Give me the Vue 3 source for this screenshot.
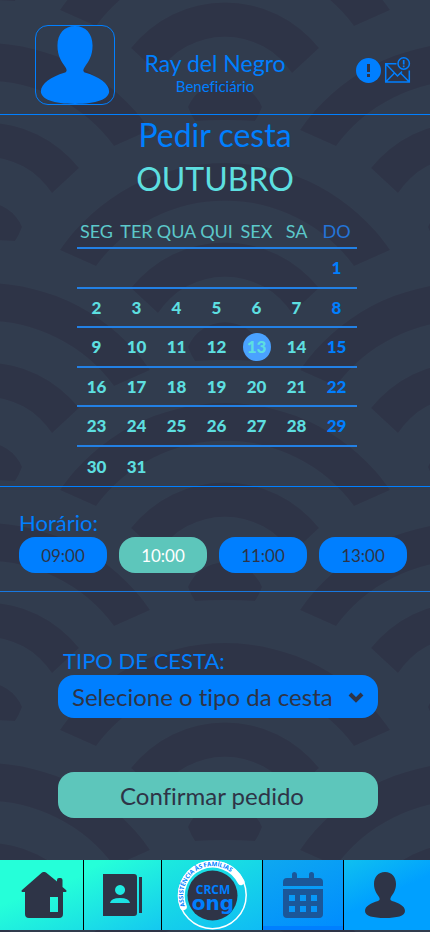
<script setup>
import { ref } from 'vue'

const weekdays = ['SEG', 'TER', 'QUA', 'QUI', 'SEX', 'SA', 'DO']
const weeks = [
  ['', '', '', '', '', '', 1],
  [2, 3, 4, 5, 6, 7, 8],
  [9, 10, 11, 12, 13, 14, 15],
  [16, 17, 18, 19, 20, 21, 22],
  [23, 24, 25, 26, 27, 28, 29],
  [30, 31, '', '', '', '', '']
]
const times = ['09:00', '10:00', '11:00', '13:00']
const day = ref(13)
const time = ref('10:00')
const basket = ref('')
</script>

<template>
  <div class="page">
    <svg class="waves" aria-hidden="true">
      <defs>
        <g id="fan">
          <path d="M-165-111A200 200 0 0 1 165-111L129-95A160 160 0 0 0-129-95Z" />
          <path d="M-94-73A120 120 0 0 1 94-73L67-48A80 80 0 0 0-67-48Z" />
          <path d="M-37-14A40 40 0 0 1 37-14Q34-6 30 0Q0-2-30 0Q-34-6-37-14Z" />
        </g>
        <pattern id="scales" width="480" height="240" patternUnits="userSpaceOnUse" patternTransform="translate(-15 1)">
          <use href="#fan" x="240" y="120" />
          <use href="#fan" x="240" y="360" />
          <use href="#fan" x="0" y="240" />
          <use href="#fan" x="480" y="240" />
        </pattern>
      </defs>
      <rect width="100%" height="100%" fill="url(#scales)" />
    </svg>

    <header class="top">
      <div class="avatar">
        <svg viewBox="0 0 80 80" aria-hidden="true">
          <path d="M40 0C51 0 58 8 58 20C58 31 54 36 50 42C48 45 48 47 51 48C64 52 75 59 75 67C75 75 62 80 40 80C18 80 5 75 5 67C5 59 16 52 29 48C32 47 32 45 30 42C26 36 22 31 22 20C22 8 29 0 40 0Z" />
        </svg>
      </div>
      <div class="who">
        <h1>Ray del Negro</h1>
        <p>Beneficiário</p>
      </div>
      <div class="alerts">
        <button type="button" aria-label="Avisos">
          <svg viewBox="0 0 25 25"><circle cx="12.500" cy="12.500" r="12.500" fill="#007fff" /><path d="M11 6h3v8h-3zM11 16h3v3h-3z" fill="#2e3447" /></svg>
        </button>
        <button type="button" aria-label="Mensagens">
          <svg viewBox="0 0 25 25" fill="none" stroke="#007fff" stroke-width="1.500"><path d="M11.500 5.800H.700v18.300h23.600V12.500M.700 5.800L12.500 18l4.500-4.500M.700 24.100l8.800-9M24.300 24.100l-8.800-9" /><circle cx="18.700" cy="5.500" r="5.700" /><path d="M18.700 2v4.500M18.700 7.500v1.700" stroke-width="1.700" /></svg>
        </button>
      </div>
    </header>

    <main>
      <section class="calendar">
        <h2>Pedir cesta</h2>
        <h3>OUTUBRO</h3>
        <table>
          <thead>
            <tr><th v-for="w in weekdays" :key="w" scope="col"><span>{{ w }}</span></th></tr>
          </thead>
          <tbody>
            <tr v-for="(week, i) in weeks" :key="i">
              <td v-for="(d, j) in week" :key="j">
                <button v-if="d" type="button" :class="{ picked: d === day }" @click="day = d">{{ d }}</button>
              </td>
            </tr>
          </tbody>
        </table>
      </section>

      <section class="hours">
        <h4>Horário:</h4>
        <div class="slots">
          <button v-for="t in times" :key="t" type="button" :class="{ chosen: t === time }" @click="time = t">{{ t }}</button>
        </div>
      </section>

      <form class="order" @submit.prevent>
        <label for="basket">TIPO DE CESTA:</label>
        <div class="picker">
          <select id="basket" v-model="basket">
            <option value="">Selecione o tipo da cesta</option>
          </select>
          <svg viewBox="0 0 16 12" aria-hidden="true"><path d="M2 3l6 6 6-6" fill="none" stroke="#2e3447" stroke-width="4" /></svg>
        </div>
        <button type="submit">Confirmar pedido</button>
      </form>
    </main>

    <nav>
      <a href="#inicio" class="home" aria-label="Início">
        <svg viewBox="0 0 46 46"><path fill-rule="evenodd" d="M21 .600Q23-.800 25 .600L36 9.500V8q0-2 2-2h1.500q2 0 2 2v7L45 18q1 1 0 2h-3v22q0 4-4 4H8q-4 0-4-4V20H1q-1-1 0-2ZM29 25v15h8V25Z" /></svg>
      </a>
      <a href="#cadastro" class="book" aria-label="Cadastro">
        <svg viewBox="0 0 39 42"><path fill-rule="evenodd" d="M0 0h31q3 0 3 3v36q0 3-3 3H0ZM17 11a5 5 0 1 0 .1 0ZM7 29h20q-1-5-10-5T7 29Z" /><path d="M36 3h3v36h-3z" /></svg>
      </a>
      <a href="#ong" class="brand" aria-label="CRCM ong">
        <svg viewBox="0 0 70 70">
          <defs><path id="arc" d="M8.100 46.100A29.500 29.500 0 1 1 64.600 29.900" /></defs>
          <circle cx="35.500" cy="35" r="33.700" fill="none" stroke="#fff" stroke-width="1.500" />
          <path d="M6.300 46.800A31.500 31.500 0 0 1 64 21.700" fill="none" stroke="#fff" stroke-width="7" stroke-linecap="round" />
          <circle cx="35.500" cy="35.500" r="25" fill="#2e3447" />
          <text class="motto"><textPath href="#arc">ASSISTÊNCIA ÀS FAMÍLIAS</textPath></text>
          <text class="crcm" x="36" y="34">CRCM</text>
          <text class="ong" x="36" y="50">ong</text>
        </svg>
      </a>
      <a href="#agenda" class="agenda" aria-label="Agenda" aria-current="page">
        <svg viewBox="0 0 40 46"><path fill-rule="evenodd" d="M0 14V10q0-4 4-4h5V2.500a2.500 2.500 0 0 1 5 0V6h12V2.500a2.500 2.500 0 0 1 5 0V6h5q4 0 4 4v4ZM0 17h40v25q0 4-4 4H4q-4 0-4-4ZM6 23v6h6v-6ZM17 23v6h6v-6ZM28 23v6h6v-6ZM6 34v6h6v-6ZM17 34v6h6v-6ZM28 34v6h6v-6Z" /></svg>
      </a>
      <a href="#perfil" class="me" aria-label="Perfil">
        <svg viewBox="0 0 40 46"><path d="M20 0C27 0 31 5 31 12C31 18 28 22 26 25C25 27 25 28 27 29C34 31 40 34 40 39C40 44 32 46 20 46C8 46 0 44 0 39C0 34 6 31 13 29C15 28 15 27 14 25C12 22 9 18 9 12C9 5 13 0 20 0Z" /></svg>
      </a>
    </nav>
  </div>
</template>

<style>
body { background: #313c4e; }
</style>

<style scoped>
.page {
  position: relative;
  min-height: 100vh;
  display: flex;
  flex-direction: column;
  background: #313c4e;
  color: #007fff;
  font-family: Lato, sans-serif;
  font-variant-ligatures: none;
  box-sizing: border-box;
  padding-bottom: 2px;
}
.page * { box-sizing: border-box; }
.waves {
  position: absolute;
  inset: 0;
  width: 100%;
  height: 100%;
  fill: #2e3447;
}
.top, main, nav { position: relative; }
h1, h2, h3, h4, p { margin: 0; font-weight: 400; }
button, select {
  font: inherit;
  font-variant-ligatures: none;
  color: inherit;
  border: 0;
  padding: 0;
  background: none;
  cursor: pointer;
}
svg { display: block; }

.top {
  display: grid;
  grid-template-columns: 1fr auto 1fr;
  align-items: center;
  padding: 25px 20px 9px;
  border-bottom: 1px solid #007fff;
}
.avatar {
  width: 80px;
  height: 80px;
  margin-left: 15px;
  border: 1px solid #007fff;
  border-radius: 13px;
  fill: #007fff;
  overflow: hidden;
}
.avatar svg { width: 78px; height: 78px; }
.who { text-align: center; padding-top: 13px; }
.who h1 { font-size: 23px; line-height: 28px; }
.who p { font-size: 15px; line-height: 18px; }
.alerts { display: flex; justify-content: flex-end; gap: 4px; padding-top: 10px; }
.alerts svg { width: 25px; height: 25px; overflow: visible; }

.calendar {
  padding-left: 3px;
  text-align: center;
  border-bottom: 1px solid #007fff;
}
.calendar h2, .calendar h3 { margin-right: 3px; }
.calendar h2 { font-size: 32px; line-height: 40px; }
.calendar h3 { font-size: 32px; line-height: 48px; color: #5ddfe0; }
table {
  width: 280px;
  margin: 11px auto 0;
  table-layout: fixed;
  border-collapse: collapse;
}
th {
  height: 34px;
  padding: 0;
  font-size: 18px;
  font-weight: 400;
  color: #5cc8ca;
  white-space: nowrap;
}
th span { display: flex; justify-content: center; }
th:last-child { color: #2474d8; }
tr { border-bottom: 2px solid #2280e4; }
tbody tr { height: 40px; }
tbody tr:nth-child(even) { height: 39px; }
tbody tr:last-child { height: 40px; border: 0; }
td { padding: 0; color: #5ddfe0; }
td:last-child { color: #007fff; }
td button {
  width: 28px;
  height: 28px;
  border-radius: 50%;
  font-size: 17px;
  font-weight: 900;
  line-height: 28px;
}
td .picked { background: #4aa2ff; }

.hours {
  padding: 22px 23px 18px 19px;
  border-bottom: 1px solid #1878e0;
}
.hours h4 { font-size: 22px; line-height: 28px; }
.slots { display: flex; gap: 12px; }
.slots button {
  flex: 1;
  height: 36px;
  border-radius: 16px;
  background: #007fff;
  color: #2e3447;
  font-size: 17px;
}
.slots .chosen { background: #5dc6bb; color: #fff; }

.order {
  display: flex;
  flex-direction: column;
  padding: 55px 52px 42px 58px;
}
.order label { font-size: 22px; line-height: 28px; padding-left: 5px; }
.picker { position: relative; }
.picker select {
  appearance: none;
  width: 100%;
  height: 43px;
  padding: 0 40px 0 14px;
  border-radius: 16px;
  background: #007fff;
  color: #2e3447;
  font-size: 24px;
}
.picker svg {
  position: absolute;
  right: 14px;
  top: 16px;
  width: 16px;
  height: 12px;
  pointer-events: none;
}
.order button {
  height: 46px;
  margin-top: 54px;
  padding-right: 12px;
  border-radius: 16px;
  background: #5dc6bb;
  color: #2e3447;
  font-size: 24px;
}

nav {
  display: grid;
  grid-template-columns: 84fr 78fr 101fr 81fr 86fr;
  height: 70px;
  margin-top: auto;
}
nav a {
  display: flex;
  align-items: center;
  justify-content: center;
  border-right: 1px solid #000;
  fill: #2e3447;
}
nav a:last-child { border: 0; }
.home {
  padding-left: 4px;
  background: linear-gradient(160deg, #25ffd9 45%, #1ae0e4);
}
.home svg { width: 46px; height: 46px; }
.book { background: linear-gradient(155deg, #25ffd9 10%, #14c8f0); }
.book svg { width: 39px; height: 42px; }
.brand { background: linear-gradient(155deg, #1ceade, #0fbcf4); }
.brand svg { width: 70px; height: 70px; }
.agenda {
  background: linear-gradient(155deg, #0ea8f0, #008cff);
  box-shadow: inset 0 -4px #007fff;
  fill: #1b5799;
}
.agenda svg { width: 40px; height: 46px; }
.me {
  padding-right: 4px;
  background: linear-gradient(155deg, #0fc0f0, #00a0ff 50%);
}
.me svg { width: 40px; height: 46px; }
.motto { font: 700 6px "Open Sans", sans-serif; fill: #007fff; }
.crcm { font: 700 12px "Open Sans", sans-serif; fill: #007fff; text-anchor: middle; }
.ong { font: 700 20px "DejaVu Sans", sans-serif; fill: #007fff; text-anchor: middle; }
</style>
